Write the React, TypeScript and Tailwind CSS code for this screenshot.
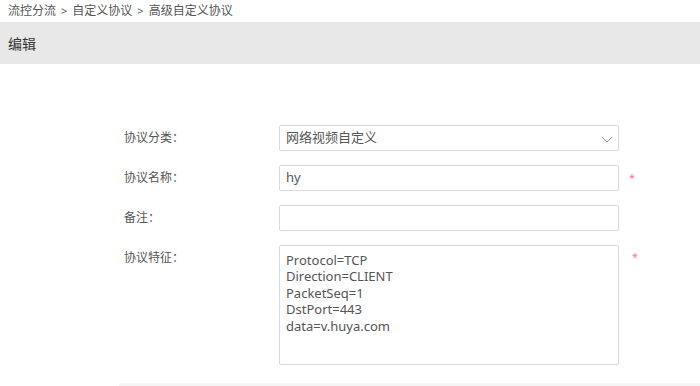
const font = { fontFamily: '"Noto Sans", "Noto Sans CJK SC", sans-serif' }

function Chevron() {
  return (
    <svg width="12" height="7" viewBox="0 0 12 7" className="absolute right-[5px] top-[10px]">
      <path d="M1 1l5 5 5-5" fill="none" stroke="#999" strokeWidth="1" />
    </svg>
  )
}

function Row({
  label,
  children,
  required,
  top,
}: {
  label: string
  children: React.ReactNode
  required?: boolean
  top?: boolean
}) {
  return (
    <div className={`flex ${top ? 'items-start' : 'items-center'}`}>
      <div className={`w-[155px] text-[12px] text-[#555] ${top ? 'pt-[4px]' : ''}`}>{label}</div>
      {children}
      {required && (
        <span className={`text-[11px] text-[#f78] ${top ? 'ml-[13px] pt-[4px]' : 'ml-[10px]'}`}>*</span>
      )}
    </div>
  )
}

export default function App() {
  return (
    <div className="h-[386px] w-[700px] overflow-hidden bg-white" style={font}>
      <div className="flex h-[22px] items-center pl-[8px] text-[12px] text-[#555]">
        流控分流<span className="mx-[5px] text-[11px]">&gt;</span>自定义协议
        <span className="mx-[5px] text-[11px]">&gt;</span>高级自定义协议
      </div>
      <div className="flex h-[42px] items-center bg-[#e8e8e8] pl-[8px] text-[14px] text-[#333]">编辑</div>
      <div className="flex flex-col gap-[14px] pl-[124px] pt-[61px]">
        <Row label="协议分类：">
          <div className="relative flex h-[26px] w-[340px] items-center rounded-[2px] border border-[#d9d9d9] pl-[6px] text-[13px] text-[#555]">
            网络视频自定义
            <Chevron />
          </div>
        </Row>
        <Row label="协议名称：" required>
          <div className="flex h-[26px] w-[340px] items-center rounded-[2px] border border-[#d9d9d9] pl-[6px] text-[13px] text-[#555]">
            hy
          </div>
        </Row>
        <Row label="备注：">
          <div className="h-[26px] w-[340px] rounded-[2px] border border-[#d9d9d9]" />
        </Row>
        <Row label="协议特征：" required top>
          <div className="h-[120px] w-[340px] rounded-[2px] border border-[#d9d9d9] px-[6px] pt-[6px] text-[13px] leading-[16.4px] text-[#555]">
            <div>Protocol=TCP</div>
            <div>Direction=CLIENT</div>
            <div>PacketSeq=1</div>
            <div>DstPort=443</div>
            <div>data=v.huya.com</div>
          </div>
        </Row>
      </div>
      <div className="ml-[119px] mt-[18px] h-[10px] bg-[#f5f5f5]" />
    </div>
  )
}
